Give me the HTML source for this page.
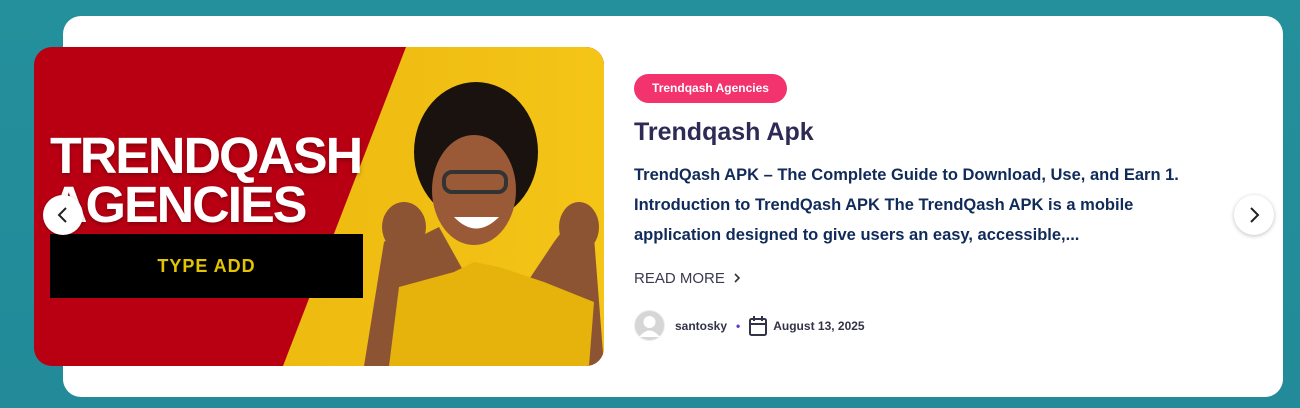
<!DOCTYPE html>
<html><head><style>
*{margin:0;padding:0;box-sizing:border-box}
body{width:1300px;height:408px;background:linear-gradient(180deg,#24909c,#228a98);font-family:"Liberation Sans",sans-serif;position:relative;overflow:hidden}
.card{position:absolute;left:63px;top:16px;width:1220px;height:381px;background:#fff;border-radius:18px}
.img{position:absolute;left:34px;top:47px;width:570px;height:319px;border-radius:18px;overflow:hidden;background:#b90012}
.yel{position:absolute;inset:0;background:linear-gradient(90deg,#e9b30a,#f4c417);clip-path:polygon(372px 0,570px 0,570px 319px,249px 319px)}
.t1{position:absolute;left:16px;top:84px;color:#fff;font-weight:bold;font-size:51px;letter-spacing:-2px;line-height:49px;text-shadow:0 2px 4px rgba(0,0,0,.3);transform:scaleX(1.02);transform-origin:left}
.blk{position:absolute;left:16px;top:187px;width:313px;height:64px;background:#000;color:#e2c500;font-weight:bold;font-size:18px;letter-spacing:1px;text-align:center;line-height:64px}
.nav{position:absolute;width:40px;height:40px;border-radius:50%;background:#fff;box-shadow:0 1px 4px rgba(0,0,0,.25)}
.tag{position:absolute;left:634px;top:74px;width:153px;height:29px;border-radius:15px;background:#f2336e;color:#fff;font-weight:bold;font-size:12px;line-height:29px;text-align:center}
h2{position:absolute;left:634px;top:118px;font-size:25px;color:#2d2b55;font-weight:bold}
.ex{position:absolute;left:634px;top:160px;width:575px;font-size:16.5px;font-weight:bold;color:#102a5a;line-height:30px}
.rm{position:absolute;left:634px;top:270px;font-size:15px;color:#3a3a50}
.meta{position:absolute;left:634px;top:310px;height:31px;display:flex;align-items:center;font-size:12px;font-weight:bold;color:#333348}
</style></head><body>
<div class="card"></div>
<div class="img">
<div class="yel"></div>
<svg style="position:absolute;left:290px;top:25px" width="280" height="294" viewBox="0 0 280 294">
<path d="M40 294 L60 170 L80 155 L95 165 L115 155 L140 200 L160 230 L200 215 L230 170 L245 150 L270 165 L280 294Z" fill="#8c5433"/>
<path d="M65 294 L75 215 L130 200 L150 190 L175 195 L220 210 L270 230 L265 294Z" fill="#e6b20c"/>
<ellipse cx="152" cy="80" rx="62" ry="70" fill="#1a120e"/>
<ellipse cx="150" cy="118" rx="42" ry="55" fill="#9a5a37"/>
<rect x="120" y="100" width="62" height="20" rx="8" fill="none" stroke="#333" stroke-width="4"/>
<path d="M130 145 Q152 168 175 145Z" fill="#fff"/>
<ellipse cx="80" cy="155" rx="22" ry="25" fill="#8c5433"/>
<ellipse cx="255" cy="155" rx="20" ry="25" fill="#8c5433"/>
</svg>
<div class="t1">TRENDQASH<br>AGENCIES</div>
<div class="blk">TYPE ADD</div>
</div>
<div class="nav" style="left:43px;top:195px"><svg width="40" height="40"><path d="M23 13 L16 20 L23 27" fill="none" stroke="#222" stroke-width="2"/></svg></div>
<div class="nav" style="left:1234px;top:195px"><svg width="40" height="40"><path d="M17 13 L24 20 L17 27" fill="none" stroke="#222" stroke-width="2"/></svg></div>
<div class="tag">Trendqash Agencies</div>
<h2>Trendqash Apk</h2>
<div class="ex">TrendQash APK – The Complete Guide to Download, Use, and Earn 1. Introduction to TrendQash APK The TrendQash APK is a mobile application designed to give users an easy, accessible,...</div>
<div class="rm">READ MORE <svg width="10" height="12" style="vertical-align:-1px;margin-left:3px"><path d="M3 2 L7 6 L3 10" fill="none" stroke="#333" stroke-width="1.6"/></svg></div>
<div class="meta">
<svg width="31" height="31" viewBox="0 0 31 31"><circle cx="15.5" cy="15.5" r="15" fill="#d6d6d6" stroke="#eee"/><circle cx="15.5" cy="12" r="6" fill="#fff"/><path d="M5 27 Q15.5 14 26 27Z" fill="#fff"/></svg>
<span style="margin-left:10px">santosky</span>
<span style="margin:0 9px;color:#5a3fd6">•</span>
<svg width="18" height="20" viewBox="0 0 18 20"><rect x="1" y="3" width="16" height="16" rx="1.5" fill="none" stroke="#333348" stroke-width="2"/><path d="M1 8 H17 M5 0 V5 M13 0 V5" stroke="#333348" stroke-width="2"/></svg>
<span style="margin-left:6px">August 13, 2025</span>
</div>
</body></html>
